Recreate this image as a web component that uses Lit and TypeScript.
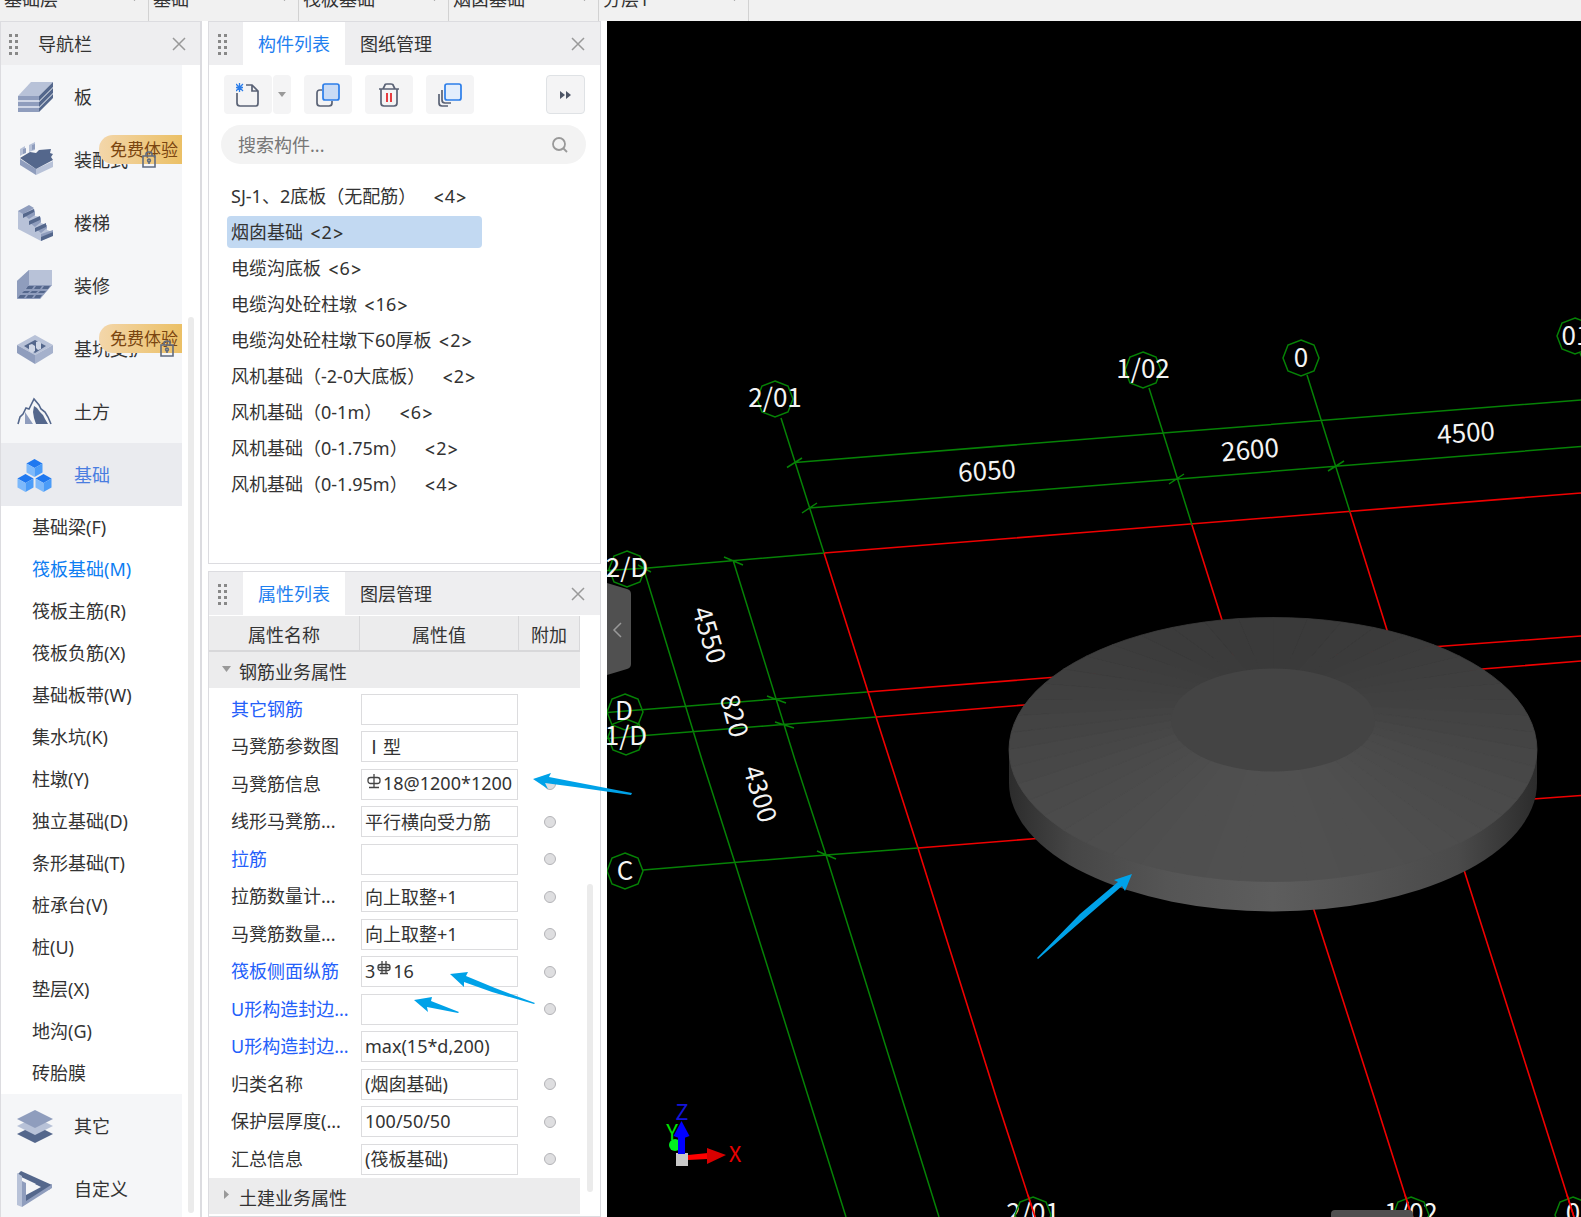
import { LitElement, html, svg, css, nothing } from "lit";
import { customElement, property } from "lit/decorators.js";
import { classMap } from "lit/directives/class-map.js";

interface NavItem {
  label: string;
  icon: string;
  trial?: boolean;
}

interface PropRow {
  name: string;
  value: string;
  /** Grade of the rebar symbol drawn in front of the value. */
  rebar?: "single" | "double";
  prefix?: string;
  link?: boolean;
  extra?: boolean;
}

const COMBOS = ["基础层", "基础", "筏板基础", "烟囱基础", "分层1"];

const NAV_TOP: NavItem[] = [
  { label: "板", icon: "slab" },
  { label: "装配式", icon: "precast", trial: true },
  { label: "楼梯", icon: "stairs" },
  { label: "装修", icon: "finish" },
  { label: "基坑支护", icon: "pit", trial: true },
  { label: "土方", icon: "earth" },
  { label: "基础", icon: "cubes" },
];

const NAV_SUB = [
  "基础梁(F)", "筏板基础(M)", "筏板主筋(R)", "筏板负筋(X)", "基础板带(W)",
  "集水坑(K)", "柱墩(Y)", "独立基础(D)", "条形基础(T)", "桩承台(V)",
  "桩(U)", "垫层(X)", "地沟(G)", "砖胎膜",
];

const NAV_BOTTOM: NavItem[] = [
  { label: "其它", icon: "layers" },
  { label: "自定义", icon: "custom" },
];

const COMPONENTS: [string, number][] = [
  ["SJ-1、2底板（无配筋）", 4],
  ["烟囱基础", 2],
  ["电缆沟底板", 6],
  ["电缆沟处砼柱墩", 16],
  ["电缆沟处砼柱墩下60厚板", 2],
  ["风机基础（-2-0大底板）", 2],
  ["风机基础（0-1m）", 6],
  ["风机基础（0-1.75m）", 2],
  ["风机基础（0-1.95m）", 4],
];

const PROPS: PropRow[] = [
  { name: "其它钢筋", value: "", link: true },
  { name: "马凳筋参数图", value: "Ⅰ型" },
  { name: "马凳筋信息", value: "18@1200*1200", rebar: "single", extra: true },
  { name: "线形马凳筋...", value: "平行横向受力筋", extra: true },
  { name: "拉筋", value: "", link: true, extra: true },
  { name: "拉筋数量计...", value: "向上取整+1", extra: true },
  { name: "马凳筋数量...", value: "向上取整+1", extra: true },
  { name: "筏板侧面纵筋", value: "16", rebar: "double", prefix: "3", link: true, extra: true },
  { name: "U形构造封边...", value: "", link: true, extra: true },
  { name: "U形构造封边...", value: "max(15*d,200)", link: true },
  { name: "归类名称", value: "(烟囱基础)", extra: true },
  { name: "保护层厚度(...", value: "100/50/50", extra: true },
  { name: "汇总信息", value: "(筏板基础)", extra: true },
];

const LIGHT = "#b8c2d8";
const MID = "#8f9dbd";
const DARK = "#54678c";

const cube = (x: number, y: number) => svg`
  <path d="M${x} ${y - 9}l8 4.5-8 4.5-8-4.5z" fill="#1f78f0"/>
  <path d="M${x - 8} ${y - 4.5}l8 4.5v9l-8-4.5z" fill="#7db9fb"/>
  <path d="M${x + 8} ${y - 4.5}l-8 4.5v9l8-4.5z" fill="#4b9cf8"/>`;

const NAV_ICONS: Record<string, unknown> = {
  slab: svg`
    <path d="M14 3h22L22 17H1z" fill="${LIGHT}"/>
    <path d="M1 17h21v4H1zM1 23h21v4H1zM1 29h21v4H1z" fill="${MID}"/>
    <path d="M1 21h21v2H1zM1 27h21v2H1z" fill="#cfd6e6"/>
    <path d="M22 17L36 3v5L22 22zM22 23L36 9v5L22 28zM22 29l14-14v4L22 33z" fill="${DARK}"/>`,
  precast: svg`
    <path d="M3 7l5-3v7l-5 3zM12 3l6-3v8l-6 2z" fill="${LIGHT}"/>
    <path d="M6 7l3-1v5l-3 1zM15 3l3-1v5l-3 1z" fill="${MID}"/>
    <path d="M3 17l16 10v6L3 23z" fill="${MID}"/>
    <path d="M19 27l17-8v6l-17 8z" fill="${LIGHT}"/>
    <path d="M3 16l10-6 6 1 3-3 12-1-1 4 3 1-2 3 2 3-17 9z" fill="${DARK}"/>`,
  stairs: svg`
    <path d="M1 6L13 1l5 4v6l6 1v6l6 2v5l6 2v3L24 36 1 24z" fill="${LIGHT}"/>
    <path d="M1 6L12 0l5 3-11 6zM6 9l12-3v4l-6 4zM12 17l12-4v4l-6 5zM18 23l12-3v3l-6 5zM24 29l12-4v2l-12 6z" fill="${MID}"/>
    <path d="M6 9l11-5v3L6 13zM12 16l11-5v4l-11 5zM18 23l11-5v4l-11 5zM24 32l12-5v4l-12 5z" fill="${DARK}"/>`,
  finish: svg`
    <path d="M0 13L12 2h23v15L23 31H0z" fill="${LIGHT}"/>
    <path d="M0 13L12 2v15L0 31z" fill="${MID}"/>
    <path d="M0 31l12-14h23L23 31z" fill="${MID}"/>
    <path d="M11 18h6l-2 3H9zM19 18h6l-2 3h-6zM27 18h6l-2 3h-6zM7 23h6l-2 2H5zM15 23h6l-2 2h-6zM23 23h6l-2 2h-6zM3 27h6l-2 3H1zM11 27h6l-2 3H9zM19 27h6l-2 3h-6z" fill="${DARK}"/>`,
  pit: svg`
    <path d="M18 4l18 10-18 10L0 14z" fill="${LIGHT}"/>
    <path d="M18 9l11 6-11 7-11-7z" fill="${DARK}"/>
    <path d="M0 14l18 10v9L0 22z" fill="${MID}"/>
    <path d="M36 14L18 24v9l18-11z" fill="#a5b1cc"/>
    <path d="M12 14l3-1 3 2v5l-3 2-3-2zM19 11l3-1 2 2v6l-3 1-2-2z" fill="#d0d7e6"/>`,
  earth: svg`
    <path d="M1 30l2-7 3-3 3-6 3 1 5-10 5 6 2 4 4 3 3 5 3 7" fill="none" stroke="${DARK}" stroke-width="1.6"/>
    <path d="M8 18l8 12-8 0z" fill="${MID}"/>
    <path d="M17 12l3 2 3 4 3 3 2 4 3 5H19l-2-6-1-6z" fill="${DARK}"/>`,
  cubes: svg`${cube(17.5, 11)}${cube(8.5, 26)}${cube(26.5, 26)}`,
  layers: svg`
    <path d="M18 17l18 9-18 9-18-9z" fill="${DARK}"/>
    <path d="M18 9l18 9-18 9-18-9z" fill="${LIGHT}"/>
    <path d="M18 2l18 9-18 9-18-9z" fill="${MID}"/>`,
  custom: svg`
    <path d="M4 0l31 14-3 5L0 4z" fill="${DARK}"/>
    <path d="M0 2l5 3v31l-5-2z" fill="${LIGHT}"/>
    <path d="M5 10l4 2v14L35 13v4L5 36z" fill="${MID}"/>
    <path d="M9 24l15-8-6-3 6-3 10 4L9 30z" fill="${DARK}"/>`,
};

const shared = css`
  :host {
    box-sizing: border-box;
    font-family: "Noto Sans", "Noto Sans CJK SC", sans-serif;
    font-size: 18px;
    line-height: 24px;
    color: #333;
  }
  *, *::before, *::after { box-sizing: border-box; }
  button, input { font: inherit; color: inherit; margin: 0; padding: 0; border: 0; background: none; }
  a { color: inherit; text-decoration: none; }
  svg { display: block; flex: none; }
`;

const grip = html`<svg width="10" height="22" viewBox="0 0 10 22" aria-hidden="true" fill="#888">
  ${[1, 7, 13, 19].map((y) => svg`<rect x="0" y=${y} width="3" height="3"/><rect x="6" y=${y} width="3" height="3"/>`)}
</svg>`;

const cross = html`<svg width="14" height="14" viewBox="0 0 14 14" aria-hidden="true" fill="none" stroke="#999" stroke-width="1.5">
  <path d="M1 1l12 12M13 1L1 13"/>
</svg>`;

@customElement("nav-panel")
class NavPanel extends LitElement {
  static styles = [
    shared,
    css`
      :host { display: flex; flex-direction: column; overflow: hidden; background: #fff; border: 1px solid #dcdce0; border-width: 1px 2px 0 1px; }
      .head { flex: none; display: flex; align-items: center; height: 43px; padding: 1px 14px 0 8px; background: #eeeef0; }
      .title { flex: 1; margin: 0 0 0 19px; font-size: 18px; font-weight: 400; }
      .body { flex: 1; min-height: 0; display: flex; }
      .list { flex: 1; overflow: hidden; background: #f5f6f8; }
      .gutter { flex: none; display: flex; width: 18px; padding: 252px 6px 4px 6px; }
      .thumb { flex: 1; border-radius: 3px; background: #ebebeb; }
      .item { position: relative; display: flex; align-items: center; height: 63px; padding-left: 16px; gap: 21px; white-space: nowrap; }
      .item.active { background: #eaebef; color: #4a7de0; }
      .badge { position: absolute; top: 7px; right: 0; height: 29px; padding: 0 4px 0 11px; border-radius: 14px 0 0 14px; background: linear-gradient(90deg, #f3d6aa, #ebc066); color: #7a4510; font-size: 17px; line-height: 30px; }
      .lock { position: relative; margin-left: -7px; }
      .sub { background: #fff; }
      .sub a { display: block; height: 42px; padding-left: 31px; line-height: 42px; }
      .sub a.active { color: #0d7df2; }
    `,
  ];

  private item(i: NavItem) {
    return html`<a href="#" class=${classMap({ item: true, active: i.icon === "cubes" })}>
      <svg width="36" height="36" viewBox="0 0 36 36" aria-hidden="true">${NAV_ICONS[i.icon]}</svg>
      <span>${i.label}</span>
      ${i.trial
        ? html`<span class="badge">免费体验</span>
            <svg class="lock" width="14" height="18" viewBox="0 0 14 18" fill="none" stroke="#5f6b80" stroke-width="1.6" aria-hidden="true">
              <path d="M1 5h12v11H1zM4 5V3q0-2 3-2t3 2v2"/><circle cx="7" cy="9.500" r="1.4"/><path d="M7 11v2"/>
            </svg>`
        : nothing}
    </a>`;
  }

  render() {
    return html`
      <header class="head">
        ${grip}
        <h2 class="title">导航栏</h2>
        <button aria-label="关闭">${cross}</button>
      </header>
      <div class="body">
        <nav class="list">
          ${NAV_TOP.map((i) => this.item(i))}
          <div class="sub">
            ${NAV_SUB.map((s, n) => html`<a href="#" class=${classMap({ active: n === 1 })}>${s}</a>`)}
          </div>
          ${NAV_BOTTOM.map((i) => this.item(i))}
        </nav>
        <div class="gutter"><div class="thumb"></div></div>
      </div>`;
  }
}

@customElement("dock-panel")
class DockPanel extends LitElement {
  @property({ type: Array }) tabs: string[] = [];

  static styles = [
    shared,
    css`
      :host { display: flex; flex-direction: column; min-height: 0; overflow: hidden; background: #fff; border: 1px solid #dcdce0; }
      .head { flex: none; display: flex; align-items: center; height: 43px; padding: 0 15px 0 9px; background: #eeeef0; }
      .tabs { flex: 1; display: flex; height: 100%; margin-left: 15px; }
      .tab { padding: 1px 15px 0; }
      .tab.active { background: #fff; color: #1f80f0; }
    `,
  ];

  render() {
    return html`
      <header class="head">
        ${grip}
        <div class="tabs" role="tablist">
          ${this.tabs.map(
            (t, n) => html`<button role="tab" aria-selected=${n === 0 ? "true" : "false"} class=${classMap({ tab: true, active: n === 0 })}>${t}</button>`
          )}
        </div>
        <button aria-label="关闭">${cross}</button>
      </header>
      <slot></slot>`;
  }
}

@customElement("component-list")
class ComponentList extends LitElement {
  static styles = [
    shared,
    css`
      :host { display: block; padding: 10px 14px 0 12px; }
      .tools { display: flex; gap: 13px; padding: 0 1px 0 3px; }
      .tool { display: flex; align-items: center; justify-content: center; width: 48px; height: 39px; border-radius: 4px; background: #f4f4f5; }
      .split { display: flex; gap: 1px; }
      .split .tool + .tool { width: 18px; }
      .more { width: 39px; margin-left: auto; border: 1px solid #dfe2e5; }
      .search { display: flex; align-items: center; height: 39px; margin-top: 11px; padding: 0 18px 0 17px; border-radius: 20px; background: #f3f3f3; }
      .search input { flex: 1; min-width: 0; outline: 0; }
      .search input::placeholder { color: #777; opacity: 1; }
      .rows { list-style: none; margin: 14px 0 0; padding: 0 0 0 6px; }
      .row { display: flex; align-items: center; height: 36px; }
      .row button { width: 255px; height: 32px; padding: 0 4px; border-radius: 4px; text-align: left; white-space: nowrap; }
      .row button.active { background: #c2d9f2; }
      .mark { font-family: Inter, sans-serif; }
      .count { margin-left: 2px; }
      .count.wide { margin-left: 12px; }
    `,
  ];

  render() {
    return html`
      <div class="tools">
        <div class="split">
          <button class="tool" aria-label="新建">
            <svg width="24" height="24" viewBox="0 0 24 24" fill="none" stroke="#5a6275" stroke-width="1.7">
              <path d="M1 10v10q0 3 3 3h16q2 0 2-3V8l-6-6H10M16 2v6h6"/>
              <path d="M0 1l7 7M7 1L0 8M3.500 0v9M0 4.500h7" stroke="#2b7de9" stroke-width="1.300"/>
            </svg>
          </button>
          <button class="tool" aria-label="新建选项">
            <svg width="8" height="5" viewBox="0 0 8 5"><path d="M0 0h8L4 5z" fill="#999"/></svg>
          </button>
        </div>
        <button class="tool" aria-label="复制">
          <svg width="24" height="24" viewBox="0 0 24 24" fill="none" stroke="#5a6275" stroke-width="1.7">
            <path d="M6 7H4Q1 7 1 10v10q0 3 3 3h9q3 0 3-3v-2"/>
            <rect x="7" y="1" width="16" height="16" rx="2" fill="#c9dbf5" stroke="#2b7de9"/>
          </svg>
        </button>
        <button class="tool" aria-label="删除">
          <svg width="22" height="24" viewBox="0 0 22 24" fill="none" stroke="#5a6275" stroke-width="1.7">
            <path d="M1 6h20M5 6l2-4q0-1 2-1h4q2 0 2 1l2 4M3 6v14q0 3 3 3h10q3 0 3-3V6"/>
            <path d="M9 10v9M13 10v9" stroke="#e5282d" stroke-width="1.800"/>
          </svg>
        </button>
        <button class="tool" aria-label="层间复制">
          <svg width="24" height="24" viewBox="0 0 24 24" fill="none" stroke="#5a6275" stroke-width="1.7">
            <path d="M1 11v9q0 3 3 3h6M4 7v10q0 3 3 3h6"/>
            <rect x="7" y="1" width="16" height="16" rx="2" fill="#e3eefc" stroke="#2b7de9"/>
          </svg>
        </button>
        <button class="tool more" aria-label="更多">
          <svg width="12" height="8" viewBox="0 0 12 8" fill="#4d5566"><path d="M0 0l5 4-5 4zM6 0l5 4-5 4z"/></svg>
        </button>
      </div>
      <label class="search">
        <input type="text" placeholder="搜索构件..." aria-label="搜索构件" />
        <svg width="16" height="16" viewBox="0 0 16 16" fill="none" stroke="#999" stroke-width="1.8"><circle cx="7" cy="7" r="6"/><path d="M11 11l4 4"/></svg>
      </label>
      <ul class="rows">
        ${COMPONENTS.map(
          ([name, count], n) => html`<li class="row"><button class=${classMap({ active: n === 1 })}>${name} <span class=${classMap({ count: true, wide: name.endsWith("）") })}><span class="mark">&lt;</span>${count}<span class="mark">&gt;</span></span></button></li>`
        )}
      </ul>`;
  }
}

@customElement("property-table")
class PropertyTable extends LitElement {
  static styles = [
    shared,
    css`
      :host { flex: 1; min-height: 0; display: flex; }
      .wrap { flex: 1; overflow: hidden; padding-top: 1px; }
      .gutter { flex: none; display: flex; width: 20px; padding: 269px 7px 24px 7px; }
      .thumb { flex: 1; border-radius: 3px; background: #ebebeb; }
      table { width: 100%; table-layout: fixed; border-collapse: separate; border-spacing: 0; }
      th, td { padding: 0; font-weight: 400; text-align: left; white-space: nowrap; }
      .c-value { width: 159px; }
      .c-extra { width: 61px; }
      thead th { height: 36px; padding-top: 3px; background: #ececed; border: solid #d8d8da; border-width: 0 1px 2px 0; text-align: center; }
      .group th { height: 38px; background: #ececed; border-bottom: 2px solid #fff; }
      .group button { display: flex; align-items: center; gap: 8px; height: 36px; padding: 3px 0 0 13px; }
      .group svg { margin-bottom: 6px; }
      .prop > * { height: 37px; }
      .prop.tall > * { height: 38px; }
      .prop th { padding: 0 0 1px 22px; overflow: hidden; }
      .prop.link th { color: #2460fa; }
      .field { display: flex; align-items: center; width: 157px; height: 31px; margin-left: 1px; padding: 0 3px 2px; border: 1px solid #dcdcde; }
      .field input { flex: 1; min-width: 0; height: 27px; outline: 0; }
      .rebar { margin: 0 2px 4px; }
      .extra { text-align: center; }
      .extra input { appearance: none; display: block; width: 12px; height: 12px; margin: 0 auto; border: 1px solid #b4b4b8; border-radius: 50%; background: #dedee0; }
    `,
  ];

  private rebar(kind: "single" | "double") {
    return html`<svg class="rebar" width="14" height="15" viewBox="0 0 14 15" fill="none" stroke="#444" stroke-width="1.3" role="img" aria-label="钢筋等级">
      ${kind === "single"
        ? svg`<rect x="1" y="3.500" width="12" height="6" rx="2.500"/><path d="M7 0v14M2 13.500h10"/>`
        : svg`<rect x="1" y="3.500" width="12" height="6" rx="2.500"/><path d="M5 0v12M9 0v12M1 6.500h12M3 12.500h8"/>`}
    </svg>`;
  }

  render() {
    return html`
      <div class="wrap">
        <table>
          <colgroup><col /><col class="c-value" /><col class="c-extra" /></colgroup>
          <thead>
            <tr><th scope="col">属性名称</th><th scope="col">属性值</th><th scope="col">附加</th></tr>
          </thead>
          <tbody>
            <tr class="group">
              <th colspan="3"><button aria-expanded="true"><svg width="9" height="6" viewBox="0 0 9 6"><path d="M0 0h9L4.500 6z" fill="#999"/></svg>钢筋业务属性</button></th>
            </tr>
            ${PROPS.map(
              (p, n) => html`<tr class=${classMap({ prop: true, tall: n % 2 === 0, link: !!p.link })}>
                <th scope="row"><label for="p${n}">${p.name}</label></th>
                <td>
                  <div class="field">
                    ${p.prefix ? html`<span>${p.prefix}</span>` : nothing}${p.rebar ? this.rebar(p.rebar) : nothing}<input id="p${n}" type="text" .value=${p.value} />
                  </div>
                </td>
                <td class="extra">${p.extra ? html`<input type="checkbox" aria-label="附加 ${p.name}" />` : nothing}</td>
              </tr>`
            )}
            <tr class="group">
              <th colspan="3"><button aria-expanded="false"><svg width="9" height="9" viewBox="0 0 9 9"><path d="M2 0v9l5-4.500z" fill="#999"/></svg>土建业务属性</button></th>
            </tr>
            <tr class="group"><th colspan="3"></th></tr>
          </tbody>
        </table>
      </div>
      <div class="gutter"><div class="thumb"></div></div>`;
  }
}

type Pt = [number, number];

@customElement("model-view")
class ModelView extends LitElement {
  static styles = css`
    :host { display: block; min-width: 0; background: #000; overflow: hidden; }
    svg { display: block; width: 100%; height: 100%; }
    .axis { fill: none; stroke: #068206; stroke-width: 1.5; }
    .grid { fill: none; stroke: #f00000; stroke-width: 1.6; }
    .label { fill: #f4f4f4; font: 26px "Noto Sans CJK SC", sans-serif; text-anchor: middle; }
    .tri { font: 22px "Noto Sans CJK SC", sans-serif; text-anchor: middle; }
  `;

  private bubble([x, y]: Pt) {
    const r = 18;
    const d = 13;
    return svg`<path class="axis" d="M${x} ${y - r}L${x + d} ${y - d}L${x + r} ${y}L${x + d} ${y + d}L${x} ${y + r}L${x - d} ${y + d}L${x - r} ${y}L${x - d} ${y - d}Z"/>`;
  }

  private label(text: string, x: number, y: number, angle = 0) {
    return svg`<text class="label" transform="translate(${x} ${y}) rotate(${angle})" y="9">${text}</text>`;
  }

  /** Sloped face of the cone, one facet per angular step, shaded by its direction. */
  private facets() {
    const steps = 48;
    const at = (k: number, cx: number, cy: number, rx: number, ry: number) => {
      const a = (k / steps) * Math.PI * 2;
      return `${(cx + rx * Math.cos(a)).toFixed(1)},${(cy + ry * Math.sin(a)).toFixed(1)}`;
    };
    return Array.from({ length: steps }, (_, k) => {
      const a = ((k + 0.5) / steps) * Math.PI * 2;
      const g = Math.round(69 + 11 * Math.sin(a));
      const c = `rgb(${g},${g},${g})`;
      const pts = [
        at(k, 1273, 720, 101, 51), at(k, 1273, 749.5, 264, 132),
        at(k + 0.5, 1273, 749.5, 264, 132), at(k + 1, 1273, 749.5, 264, 132), at(k + 1, 1273, 720, 101, 51),
      ].join(" ");
      return svg`<polygon points=${pts} fill=${c} stroke=${c} stroke-width="0.8"/>`;
    });
  }

  render() {
    const bubbles: Pt[] = [[775, 399], [1143, 370], [1301, 358], [1575, 336], [627, 569], [625, 712], [626, 737], [625, 871], [1033, 1215], [1411, 1215], [1573, 1215]];
    return html`<svg viewBox="607 21 974 1196" preserveAspectRatio="xMinYMin slice" role="img" aria-label="三维模型视图">
      <defs>
        <linearGradient id="side">
          <stop offset="0" stop-color="#2c2c2c"/><stop offset="0.12" stop-color="#464646"/>
          <stop offset="0.3" stop-color="#555"/>
          <stop offset="0.5" stop-color="#5d5d5d"/><stop offset="0.85" stop-color="#4a4a4a"/>
          <stop offset="1" stop-color="#2c2c2c"/>
        </linearGradient>
      </defs>
      <path class="grid" d="M824 553L876 717L918 848L997 1100L1035 1217M1192 525L1222 620L1314 910L1375 1100L1412 1217M1350 512L1387 630L1464 870L1537 1100L1574 1217
        M824 553L1090 532L1581 493M867 692L1051 677.500L1438 646.500L1581 636M876 717L1024 705L1482 669L1581 661M918 848L1037 838.500L1533 799L1581 795.500"/>
      <path class="axis" d="M781 418L824 553M1149 388L1192 525M1307 375L1350 512M1580 353L1584 362
        M795 462.500L1163 433L1581 400M809 508L1178 479L1581 446.500
        M607 570.500L648 568L824 553M607 712.500L776 699L867 692M607 738.500L783 724.500L876 717M643 870L826 855L918 848
        M644 570L702 760L735 863L846 1217M733 560L795 760L826 855L939 1217
        M787 467.500L802 458M802 513L817 503M1169 484L1184 474M1328 471L1344 461
        M724 557L743 565M638 565L651 572M767 696L786 703M775 722L794 728M817 851L836 859"/>
      ${bubbles.slice(0, 8).map((b) => this.bubble(b))}
      <ellipse cx="1273" cy="783" rx="264" ry="128.500" fill="url(#side)"/>
      <path d="M1009 749h528v34h-528z" fill="url(#side)"/>
      ${this.facets()}
      <ellipse cx="1273" cy="720" rx="102" ry="51.500" fill="#444"/>
      ${this.label("2/01", 775, 398)}${this.label("1/02", 1143, 369)}${this.label("0", 1301, 358)}${this.label("01", 1576, 336)}
      ${this.label("2/D", 627, 568)}${this.label("D", 624, 711)}${this.label("1/D", 626, 736)}${this.label("C", 625, 871)}
      ${this.label("6050", 987, 471, -4)}${this.label("2600", 1250, 450, -5)}${this.label("4500", 1466, 433, -4)}
      ${this.label("4550", 709, 635, 73)}${this.label("820", 734, 716, 75)}${this.label("4300", 760, 794, 73)}
      ${this.label("2/01", 1033, 1213)}${this.label("1/02", 1411, 1213)}${this.label("0", 1573, 1213)}
      ${bubbles.slice(8).map((b) => this.bubble(b))}
      <path class="grid" d="M1028 1195L1035 1217M1405 1195L1412 1217M1567 1195L1574 1217"/>
      <path d="M1331 1217v-3q0-4 4-4h74q4 0 4 4v3z" fill="#505050"/>
      <path d="M607 583l20 6q4 1 4 5v70q0 4-4 5l-20 6z" fill="#505050"/>
      <path d="M621 623l-7 7 7 7" fill="none" stroke="#999" stroke-width="1.5"/>
      <text class="tri" x="672" y="1140" fill="#00e400">Y</text>
      <circle cx="675" cy="1145" r="6" fill="#00f020"/>
      <path d="M676 1153h12v13h-12z" fill="#c8c8c8"/>
      <path d="M678 1136h7v18h-7z" fill="#0000ff"/><path d="M681.500 1121l8 15q-8 4-16 0z" fill="#0000ff"/>
      <path d="M688 1155l20-2v6l-20 1z" fill="#ff0000"/><path d="M707 1148l19 7-19 9z" fill="#d80000"/>
      <text class="tri" x="682" y="1120" fill="#1414d8">Z</text>
      <text class="tri" x="735" y="1162" fill="#e80000">X</text>
    </svg>`;
  }
}

@customElement("app-root")
class AppRoot extends LitElement {
  static styles = [
    shared,
    css`
      :host { position: relative; display: flex; flex-direction: column; height: 100vh; overflow: hidden; background: #fff; }
      .strip { flex: none; display: flex; align-items: flex-end; height: 21px; overflow: hidden; background: #f1f1f1; }
      .combo { flex: none; display: flex; align-items: center; justify-content: space-between; width: 150px; height: 45px; padding: 0 10px 0 4px; border-right: 1px solid #d2d2d2; }
      .combo:first-child { width: 149px; }
      .main { flex: 1; min-height: 0; display: grid; grid-template-columns: 202px 393px minmax(0, 1fr); column-gap: 6px; }
      .docks { display: grid; grid-template-rows: minmax(0, 543fr) minmax(0, 646fr); row-gap: 7px; min-height: 0; }
      .notes { position: absolute; top: 0; left: 0; pointer-events: none; }
    `,
  ];

  render() {
    return html`
      <div class="strip">
        ${COMBOS.map((c) => html`<button class="combo">${c}<svg width="7" height="4" viewBox="0 0 7 4"><path d="M0 0h7L3.500 4z" fill="#999"/></svg></button>`)}
      </div>
      <main class="main">
        <nav-panel></nav-panel>
        <div class="docks">
          <dock-panel .tabs=${["构件列表", "图纸管理"]}><component-list></component-list></dock-panel>
          <dock-panel .tabs=${["属性列表", "图层管理"]}><property-table></property-table></dock-panel>
        </div>
        <model-view></model-view>
      </main>
      <svg class="notes" width="1140" height="1020" viewBox="0 0 1140 1020" fill="#00a2e8" aria-hidden="true">
        <path d="M533 779L551 773L549 777L580 783L632 793L631 795L575 787L545 783L548 789Z"/>
        <path d="M450 974L468 972L466 976L495 988L535 1003L534 1004L492 992L464 982L464 987Z"/>
        <path d="M414 1000L432 997L431 1001L459 1012L458 1013L427 1007L428 1012Z"/>
        <path d="M1132 874L1125 891L1122 886L1085 918L1038 959L1037 958L1080 914L1118 882L1114 880Z"/>
      </svg>`;
  }
}
